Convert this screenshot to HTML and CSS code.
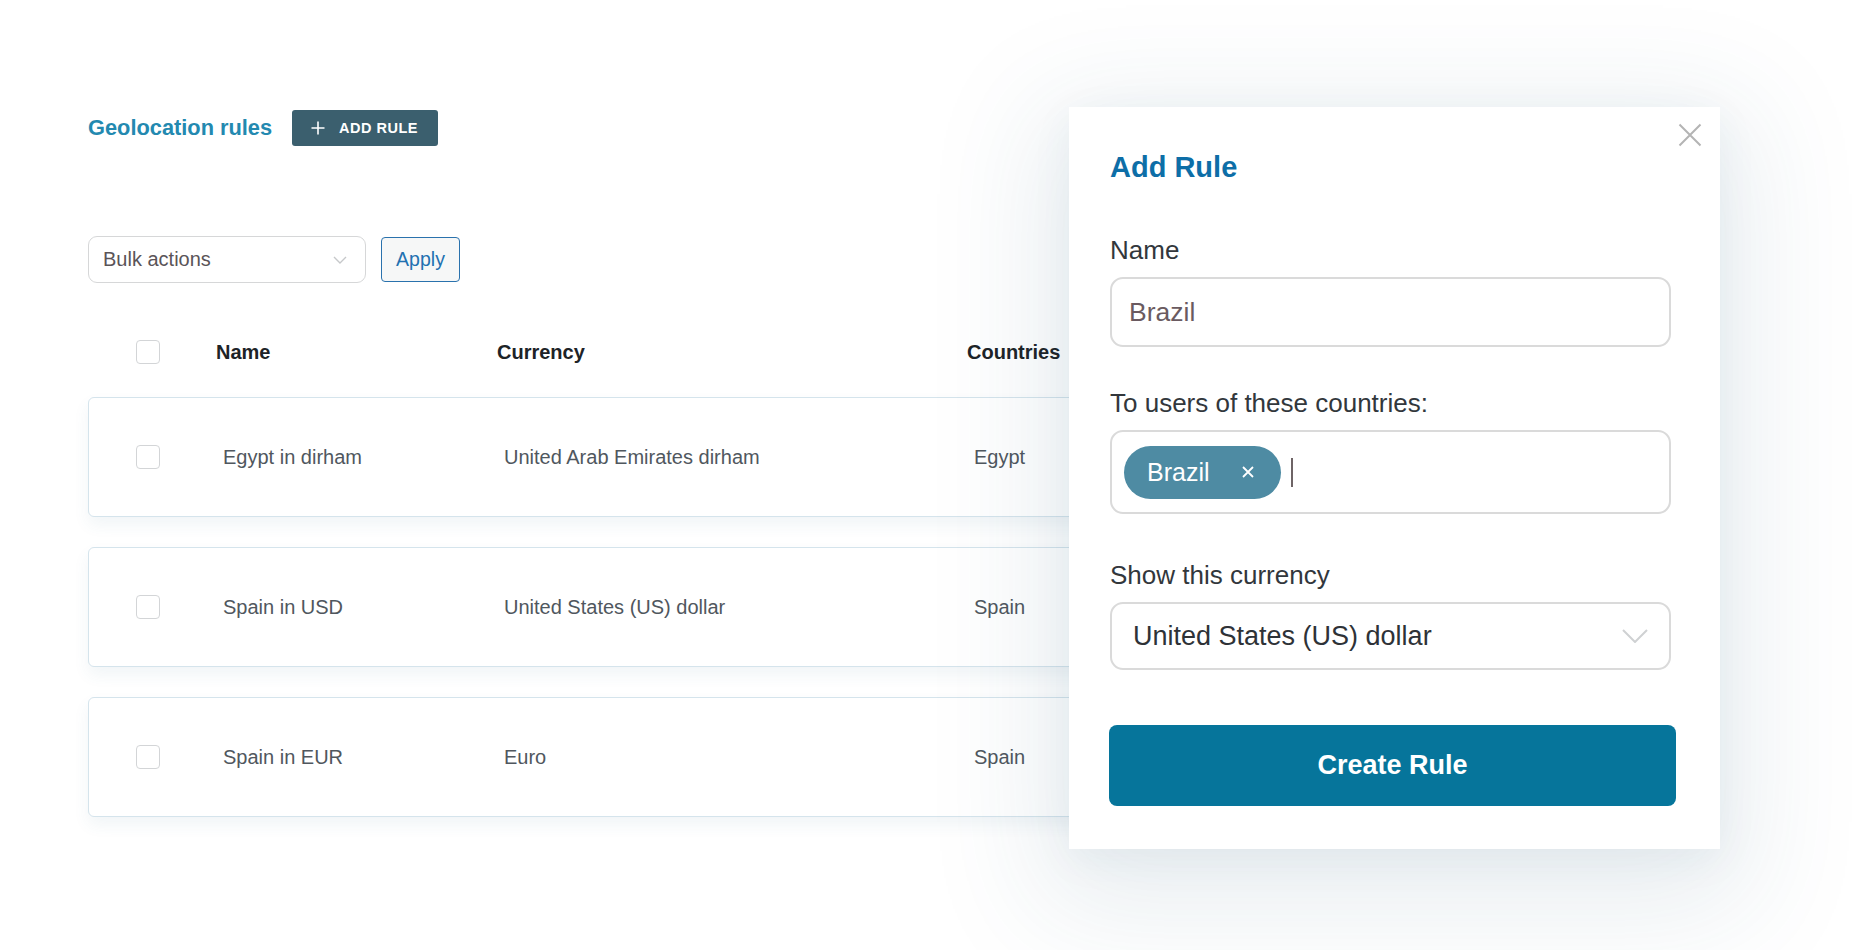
FILE: index.html
```html
<!DOCTYPE html>
<html lang="en">
<head>
<meta charset="utf-8">
<title>Geolocation rules</title>
<link rel="stylesheet" href="styles.css">
</head>
<body>
<div class="page">
  <main class="main">
    <div class="head">
      <h1 class="title">Geolocation rules</h1>
      <button class="add-btn">
        <svg class="plus" width="14" height="14" viewBox="0 0 14 14"><path d="M7 0.5V13.5M0.5 7H13.5" stroke="#fff" stroke-width="1.6" fill="none"/></svg>
        <span>ADD RULE</span>
      </button>
    </div>

    <div class="bulk">
      <div class="bulk-select">
        <span>Bulk actions</span>
        <svg width="14" height="8" viewBox="0 0 14 8"><path d="M1 1L7 7L13 1" stroke="#c6c8ca" stroke-width="1.4" fill="none"/></svg>
      </div>
      <button class="apply">Apply</button>
    </div>

    <div class="thead grid">
      <span class="cb"></span>
      <span class="th">Name</span>
      <span class="th">Currency</span>
      <span class="th">Countries</span>
    </div>

    <div class="rows">
      <div class="card grid">
        <span class="cb"></span>
        <span class="td">Egypt in dirham</span>
        <span class="td">United Arab Emirates dirham</span>
        <span class="td">Egypt</span>
      </div>
      <div class="card grid">
        <span class="cb"></span>
        <span class="td">Spain in USD</span>
        <span class="td">United States (US) dollar</span>
        <span class="td">Spain</span>
      </div>
      <div class="card grid">
        <span class="cb"></span>
        <span class="td">Spain in EUR</span>
        <span class="td">Euro</span>
        <span class="td">Spain</span>
      </div>
    </div>
  </main>

  <aside class="panel">
    <button class="close" aria-label="Close">
      <svg width="24" height="24" viewBox="0 0 24 24"><path d="M1.5 1.5L22.5 22.5M22.5 1.5L1.5 22.5" stroke="#b4b4b4" stroke-width="2" fill="none"/></svg>
    </button>
    <h2 class="panel-title">Add Rule</h2>

    <label class="label">Name</label>
    <div class="field name-field">Brazil</div>

    <label class="label">To users of these countries:</label>
    <div class="field tags-field">
      <span class="chip">
        <span>Brazil</span>
        <svg width="12" height="12" viewBox="0 0 12 12"><path d="M1 1L11 11M11 1L1 11" stroke="#fff" stroke-width="1.8" fill="none"/></svg>
      </span>
      <span class="caret"></span>
    </div>

    <label class="label">Show this currency</label>
    <div class="field select-field">
      <span>United States (US) dollar</span>
      <svg width="26" height="14" viewBox="0 0 26 14"><path d="M1 1L13 13L25 1" stroke="#cfd1d3" stroke-width="2" fill="none"/></svg>
    </div>

    <button class="create">Create Rule</button>
  </aside>
</div>
</body>
</html>
```

FILE: styles.css
```css
* { box-sizing: border-box; }

html, body {
  margin: 0;
  padding: 0;
  background: #ffffff;
}

body {
  font-family: "Liberation Sans", Arial, sans-serif;
  color: #50575e;
  width: 1858px;
  height: 950px;
  overflow: hidden;
}

.page {
  position: relative;
  width: 1858px;
  height: 950px;
}

.main {
  padding: 110px 0 0 88px;
}

.head {
  display: flex;
  align-items: center;
  gap: 20px;
  height: 36px;
}

.title {
  margin: 0;
  font-size: 21.8px;
  font-weight: 700;
  color: #2389b0;
}

.add-btn {
  display: flex;
  align-items: center;
  gap: 14px;
  height: 36px;
  width: 146px;
  padding: 0 0 0 19px;
  border: none;
  border-radius: 3px;
  background: #3b5f6e;
  color: #ffffff;
  font-family: "Liberation Sans", Arial, sans-serif;
  font-size: 14.5px;
  font-weight: 700;
  letter-spacing: 0.5px;
}

.bulk {
  display: flex;
  align-items: center;
  gap: 15px;
  margin-top: 90px;
}

.bulk-select {
  display: flex;
  align-items: center;
  justify-content: space-between;
  width: 278px;
  height: 47px;
  padding: 0 18px 0 14px;
  border: 1px solid #d6d7d8;
  border-radius: 9px;
  font-size: 20px;
  color: #5a5458;
}

.apply {
  width: 79px;
  height: 45px;
  border: 1px solid #2a72ad;
  border-radius: 4px;
  background: #f6f7f7;
  color: #2271b1;
  font-family: "Liberation Sans", Arial, sans-serif;
  font-size: 19.5px;
}

.grid {
  display: grid;
  grid-template-columns: 80px 281px 470px 1fr;
  align-items: center;
}

.thead {
  margin-top: 57px;
  padding-left: 48px;
  height: 24px;
}

.th {
  font-size: 20px;
  font-weight: 700;
  color: #1d2327;
}

.cb {
  width: 24px;
  height: 24px;
  border: 1px solid #d3d5d7;
  border-radius: 4px;
  background: #fff;
}

.rows {
  display: flex;
  flex-direction: column;
  gap: 30px;
  margin-top: 33px;
}

.card {
  width: 1110px;
  height: 120px;
  padding-left: 47px;
  border: 1px solid #d5e4ec;
  border-radius: 6px;
  background: #ffffff;
  box-shadow: 0 8px 16px rgba(60, 110, 140, 0.07);
}

.td {
  padding-left: 7px;
  font-size: 20px;
  color: #50575e;
}

/* Add Rule panel */
.panel {
  position: absolute;
  left: 1069px;
  top: 107px;
  width: 651px;
  height: 742px;
  padding: 42px 48px 0 41px;
  background: #ffffff;
  box-shadow: 0 30px 110px 30px rgba(40, 85, 120, 0.10), 0 10px 40px rgba(40, 85, 120, 0.06);
}

.close {
  position: absolute;
  top: 16px;
  right: 18px;
  width: 24px;
  height: 24px;
  padding: 0;
  border: none;
  background: none;
}

.close svg { display: block; }

.panel-title {
  margin: 0;
  height: 36px;
  line-height: 36px;
  font-size: 29px;
  font-weight: 700;
  color: #0d6ea7;
}

.label {
  display: block;
  height: 32px;
  line-height: 32px;
  margin-top: 49px;
  font-size: 26px;
  color: #32373c;
}

.name-field + .label { margin-top: 40px; }
.tags-field + .label { margin-top: 45px; }

.field {
  width: 561px;
  margin-top: 11px;
  border: 2px solid #dadada;
  border-radius: 13px;
  background: #fff;
}

.name-field {
  display: flex;
  align-items: center;
  height: 70px;
  padding-left: 17px;
  font-size: 26.5px;
  color: #6a5a60;
}

.tags-field {
  display: flex;
  align-items: center;
  gap: 10px;
  height: 84px;
  padding-left: 12px;
}

.chip {
  display: flex;
  align-items: center;
  justify-content: space-between;
  width: 157px;
  height: 53px;
  padding: 0 27px 0 23px;
  border-radius: 27px;
  background: #4e8ba3;
  color: #ffffff;
  font-size: 25px;
}

.caret {
  width: 2px;
  height: 29px;
  background: #6e6466;
}

.select-field {
  display: flex;
  align-items: center;
  justify-content: space-between;
  height: 68px;
  padding: 0 21px 0 21px;
  font-size: 27px;
  color: #2e3237;
}

.create {
  display: block;
  width: 567px;
  height: 81px;
  margin-top: 55px;
  margin-left: -1px;
  border: none;
  border-radius: 8px;
  background: #06759b;
  color: #ffffff;
  font-family: "Liberation Sans", Arial, sans-serif;
  font-size: 27px;
  font-weight: 700;
}
```
